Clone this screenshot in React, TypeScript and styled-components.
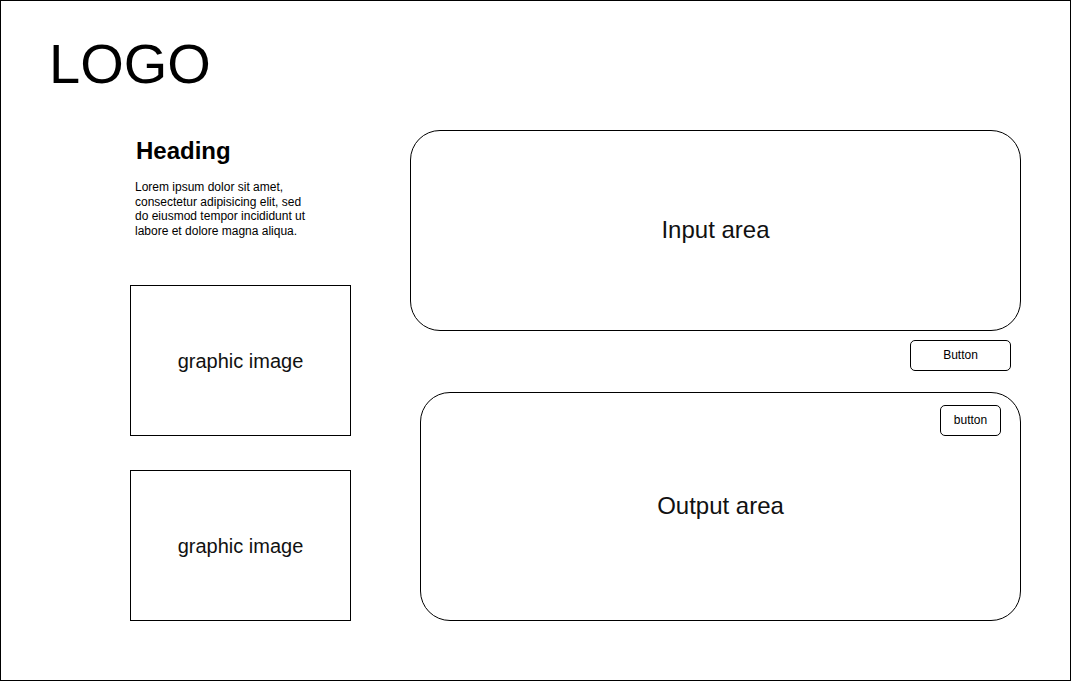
import styled, { createGlobalStyle } from "styled-components";

const GlobalStyle = createGlobalStyle`
  * {
    box-sizing: border-box;
  }

  body {
    margin: 0;
    background: #fff;
    font-family: "Liberation Sans", Arial, Helvetica, sans-serif;
    color: #000;
  }
`;

const Frame = styled.div`
  width: 1071px;
  height: 681px;
  border: 1px solid #000;
  display: flex;
  flex-direction: column;
  padding-top: 35px;
  background: #fff;
`;

const Logo = styled.div`
  margin-left: 48px;
  font-size: 56px;
  line-height: 56px;
  height: 56px;
`;

const Content = styled.div`
  display: flex;
  gap: 59px;
  margin-top: 38px;
  padding-left: 129px;
`;

const Sidebar = styled.div`
  width: 221px;
  display: flex;
  flex-direction: column;
`;

const Heading = styled.h1`
  margin: 9px 0 0 6px;
  font-size: 24px;
  line-height: 24px;
  font-weight: 700;
`;

const Intro = styled.p`
  margin: 17px 0 0 5px;
  width: 180px;
  font-size: 12px;
  line-height: 14.5px;
`;

const GraphicBox = styled.div<{ $gap: number }>`
  margin-top: ${(p) => p.$gap}px;
  width: 221px;
  height: 151px;
  border: 1px solid #000;
  display: flex;
  align-items: center;
  justify-content: center;
  padding-top: 2px;
  font-size: 20px;
  color: #111;
`;

const Workspace = styled.div`
  width: 611px;
  display: flex;
  flex-direction: column;
`;

const InputArea = styled.div`
  width: 611px;
  height: 201px;
  border: 1px solid #000;
  border-radius: 30px;
  display: flex;
  align-items: center;
  justify-content: center;
  padding-bottom: 2px;
  font-size: 24px;
  color: #111;
`;

const ButtonRow = styled.div`
  display: flex;
  justify-content: flex-end;
  margin-top: 9px;
  padding-right: 10px;
`;

const Button = styled.button<{ $w: number }>`
  width: ${(p) => p.$w}px;
  height: 31px;
  border: 1px solid #000;
  border-radius: 5px;
  background: #fff;
  padding: 0 0 2px;
  font-family: "Liberation Sans", Arial, Helvetica, sans-serif;
  font-size: 12px;
  color: #000;
  cursor: pointer;
`;

const OutputArea = styled.div`
  margin-top: 21px;
  margin-left: 10px;
  width: 601px;
  height: 229px;
  border: 1px solid #000;
  border-radius: 30px;
  display: grid;
  grid-template: 1fr / 1fr;
`;

const OutputLabel = styled.div`
  grid-area: 1 / 1;
  align-self: center;
  justify-self: center;
  margin-bottom: 2px;
  font-size: 24px;
  color: #111;
`;

const CornerButton = styled(Button)`
  grid-area: 1 / 1;
  align-self: start;
  justify-self: end;
  margin: 12px 19px 0 0;
`;

function App() {
  return (
    <>
      <GlobalStyle />
      <Frame>
        <Logo>LOGO</Logo>
        <Content>
          <Sidebar>
            <Heading>Heading</Heading>
            <Intro>
              Lorem ipsum dolor sit amet, consectetur adipisicing elit, sed do
              eiusmod tempor incididunt ut labore et dolore magna aliqua.
            </Intro>
            <GraphicBox $gap={47}>graphic image</GraphicBox>
            <GraphicBox $gap={34}>graphic image</GraphicBox>
          </Sidebar>
          <Workspace>
            <InputArea>Input area</InputArea>
            <ButtonRow>
              <Button $w={101}>Button</Button>
            </ButtonRow>
            <OutputArea>
              <OutputLabel>Output area</OutputLabel>
              <CornerButton $w={61}>button</CornerButton>
            </OutputArea>
          </Workspace>
        </Content>
      </Frame>
    </>
  );
}

export default App;
